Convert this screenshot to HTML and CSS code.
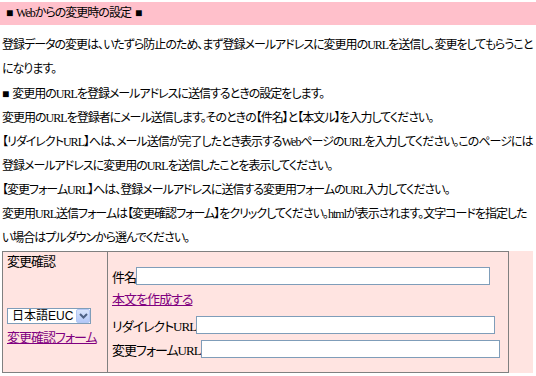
FILE: index.html
```html
<!DOCTYPE html>
<html lang="ja">
<head>
  <meta charset="UTF-8">
  <title>Webからの変更時の設定</title>
  <link rel="stylesheet" href="styles.css">
</head>
<body>

<!-- 見出し -->
  <div class="title">■ Webからの変更時の設定 ■</div>

<!-- 説明 -->
  <div class="content">
    <p class="lead">登録データの変更は、いたずら防止のため、まず登録メールアドレスに変更用のURLを送信し、変更をしてもらうことになります。</p>
    <p class="guide">■ 変更用のURLを登録メールアドレスに送信するときの設定をします。<br>
    変更用のURLを登録者にメール送信します。そのときの【件名】と【本文ル】を入力してください。<br>
    【リダイレクトURL】へは、メール送信が完了したとき表示するWebページのURLを入力してください。このページには登録メールアドレスに変更用のURLを送信したことを表示してください。<br>
    【変更フォームURL】へは、登録メールアドレスに送信する変更用フォームのURL入力してください。<br>
    変更用URL送信フォームは【変更確認フォーム】をクリックしてください。htmlが表示されます。文字コードを指定したい場合はプルダウンから選んでください。</p>

<!-- 設定フォーム -->
    <div class="form-area">
      <table class="form-table">
        <tr>
          <td class="side">
            <div class="side-label">変更確認</div>
            <span class="select-wrap">
              <select class="charset">
                <option>日本語EUC</option>
                <option>シフトJIS</option>
                <option>UTF-8</option>
              </select>
              <span class="select-btn">
                <svg width="9" height="6" viewBox="0 0 9 6"><path d="M1 1 L4.5 4.5 L8 1" fill="none" stroke="#4d6185" stroke-width="2"/></svg>
              </span>
            </span>
            <div class="side-link"><a href="#">変更確認フォーム</a></div>
          </td>
          <td class="fields">
            <div class="row row-subject">件名<input type="text" class="in-subject"></div>
            <div class="row row-body"><a href="#">本文を作成する</a></div>
            <div class="row row-redirect">リダイレクトURL<input type="text" class="in-url"></div>
            <div class="row row-form">変更フォームURL<input type="text" class="in-url"></div>
          </td>
        </tr>
      </table>
    </div>
  </div>

</body>
</html>
```

FILE: styles.css
```css
* {
  margin: 0;
  padding: 0;
  box-sizing: border-box;
}

body {
  font-family: "Liberation Serif", "Noto Sans CJK JP", serif;
  font-size: 12px;
  letter-spacing: -1px;
  word-spacing: 2px;
  color: #000;
  background: #fff;
  font-feature-settings: "palt";
}

a {
  color: #800080;
}

/* 見出し */
.title {
  margin-top: 2px;
  height: 23px;
  line-height: 23px;
  padding-left: 6px;
  background: #ffc0cb;
}

/* 説明 */
.content {
  padding: 0 2px;
}

.content p {
  line-height: 24px;
}

.lead {
  margin-top: 8px;
}

.guide {
  margin-top: 1px;
}

/* 設定フォーム */
.form-area {
  width: 531px;
  margin-top: 1px;
  background: #ffe4e1;
}

.form-table {
  width: 507px;
  height: 122px;
  border-collapse: collapse;
  font-size: 13px;
}

.form-table td {
  border: 1px solid #808080;
  vertical-align: top;
}

.side {
  width: 105px;
  padding: 1px 4px 0;
}

.side-label {
  line-height: 18px;
}

.select-wrap {
  position: relative;
  display: inline-block;
  margin-top: 37px;
}

.charset {
  appearance: none;
  -webkit-appearance: none;
  display: block;
  width: 84px;
  height: 16px;
  padding-left: 4px;
  border: 1px solid #7f9db9;
  background: #fff;
  font-family: "Liberation Sans", "Noto Sans CJK JP", sans-serif;
  font-size: 12px;
  letter-spacing: 0;
  line-height: 14px;
  color: #000;
}

.select-btn {
  position: absolute;
  top: 1px;
  right: 1px;
  width: 14px;
  height: 14px;
  display: flex;
  align-items: center;
  justify-content: center;
  border: 1px solid #b4c8f4;
  border-radius: 2px;
  background: linear-gradient(#d9e5fd, #b3c8f8);
  pointer-events: none;
}

.side-link {
  line-height: 18px;
  margin-top: 5px;
  white-space: nowrap;
}

.fields {
  padding: 15px 4px 0;
}

.row {
  display: flex;
  align-items: center;
  height: 18px;
  white-space: nowrap;
}

.row-body {
  margin-top: 4px;
}

.row-redirect {
  margin-top: 9px;
}

.row-form {
  margin-top: 6px;
}

.row input {
  height: 18px;
  border: 1px solid #7f9db9;
  background: #fff;
}

.in-subject {
  width: 354px;
}

.in-url {
  width: 299px;
}
```
